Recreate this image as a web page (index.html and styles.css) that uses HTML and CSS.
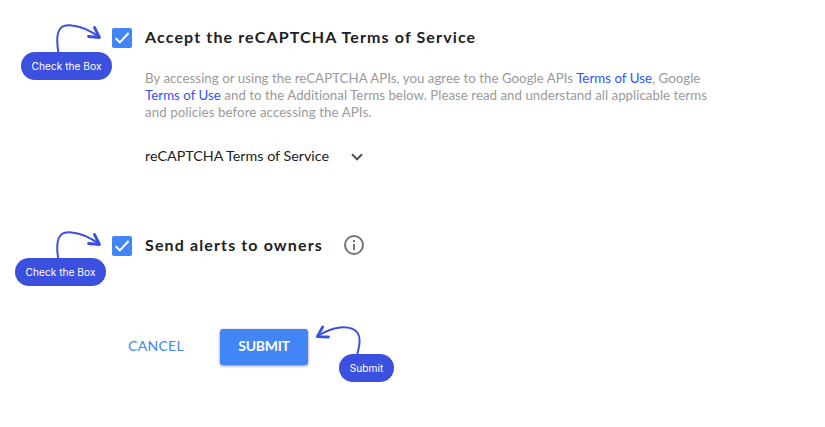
FILE: index.html
```
<!DOCTYPE html>
<html lang="en">
<head>
  <meta charset="UTF-8">
  <meta name="viewport" content="width=device-width, initial-scale=1.0">
  <title>reCAPTCHA</title>
  <link rel="stylesheet" href="styles.css">
</head>
<body>

<main class="form">
  <!-- Terms -->
  <section class="option terms">
    <span class="checkbox">
      <svg viewBox="0 0 20 20"><path d="M3.7 10.2 7.9 14.4 16.6 5"/></svg>
    </span>
    <div class="option-body">
      <h2>Accept the reCAPTCHA Terms of Service</h2>
      <p class="terms-text">
        <span class="line-1">By accessing or using the reCAPTCHA APIs, you agree to the Google APIs <a>Terms of Use</a>, Google</span><br>
        <span class="line-2"><a>Terms of Use</a> and to the Additional Terms below. Please read and understand all applicable terms</span><br>
        <span class="line-3">and policies before accessing the APIs.</span>
      </p>
      <div class="expander">
        <span>reCAPTCHA Terms of Service</span>
        <svg class="chevron" viewBox="0 0 12 8"><path d="M1 1.2 6 6.3 11 1.2"/></svg>
      </div>
    </div>
    <div class="hint hint-terms">
      <svg class="arrow" viewBox="0 0 50 32">
        <path class="stem" d="M3.500 31C1.500 20 1.500 12 5 7C8 3 13 3 17 3.500C27 4.500 36 9 44 15"/>
        <path class="head" d="M39.500 5.500 44.500 15.500 33.500 14.500"/>
      </svg>
      <span class="pill">Check the Box</span>
    </div>
  </section>

  <!-- Alerts -->
  <section class="option alerts">
    <span class="checkbox">
      <svg viewBox="0 0 20 20"><path d="M3.7 10.2 7.9 14.4 16.6 5"/></svg>
    </span>
    <h2>Send alerts to owners</h2>
    <svg class="info" viewBox="0 0 20 20">
      <circle cx="10" cy="10" r="9"/>
      <path d="M10 5v2M10 9v6"/>
    </svg>
    <div class="hint hint-alerts">
      <svg class="arrow" viewBox="0 0 50 32">
        <path class="stem" d="M3.500 31C1.500 20 1.500 12 5 7C8 3 13 3 17 3.500C27 4.500 36 9 44 15"/>
        <path class="head" d="M39.500 5.500 44.500 15.500 33.500 14.500"/>
      </svg>
      <span class="pill">Check the Box</span>
    </div>
  </section>

  <!-- Buttons -->
  <section class="actions">
    <button class="btn-cancel">CANCEL</button>
    <button class="btn-submit">SUBMIT</button>
    <div class="hint hint-submit">
      <svg class="arrow" viewBox="0 0 50 32">
        <path class="stem" d="M43 31C46 21 47 14 43.700 9C40 4 32 3 26 3.500C17 4.500 10 8 4 12"/>
        <path class="head" d="M8.700 3 3.200 12.600 14.500 13"/>
      </svg>
      <span class="pill">Submit</span>
    </div>
  </section>
</main>

</body>
</html>
```

FILE: styles.css
```
* {
  margin: 0;
  padding: 0;
  box-sizing: border-box;
}

body {
  min-height: 100vh;
  font-family: Lato, 'Open Sans', sans-serif;
  font-variant-ligatures: none;
  background: #fff;
  color: #202124;
}

.form {
  min-height: 100vh;
  padding: 28px 0 0 112px;
}

.option {
  position: relative;
  display: flex;
  gap: 13px;
}

.terms {
  height: 208px;
}

.alerts {
  height: 93px;
}

.checkbox {
  width: 20px;
  height: 20px;
  border-radius: 2px;
  background: #4285f4;
}

.checkbox svg {
  display: block;
}

.checkbox path {
  fill: none;
  stroke: #fff;
  stroke-width: 2;
}

h2 {
  height: 20px;
  font-size: 16px;
  line-height: 18px;
  font-weight: 700;
  letter-spacing: 1.13px;
  white-space: nowrap;
}

.terms-text {
  margin-top: 22px;
  font-size: 13.3px;
  line-height: 17px;
  letter-spacing: 0.02px;
  color: #9a9a9a;
  white-space: nowrap;
}

.line-3 {
  letter-spacing: 0.08px;
}

.terms-text a {
  color: #2f54f5;
}

.expander {
  display: flex;
  gap: 22px;
  height: 20px;
  margin-top: 26px;
  font-size: 14.3px;
  line-height: 17px;
  white-space: nowrap;
}

.chevron {
  width: 12px;
  height: 8px;
  margin-top: 6px;
  fill: none;
  stroke: #555;
  stroke-width: 2;
}

.info {
  width: 20px;
  height: 20px;
  margin: -1px 0 0 8px;
  fill: none;
  stroke: #757575;
  stroke-width: 2;
}

.actions {
  position: relative;
  display: flex;
  gap: 20px;
}

button {
  height: 36px;
  padding-bottom: 3px;
  border: none;
  border-radius: 3px;
  font-family: inherit;
  font-size: 14px;
  cursor: pointer;
}

.btn-cancel {
  width: 88px;
  background: none;
  color: #4285f4;
  letter-spacing: 0.3px;
}

.btn-submit {
  width: 88px;
  background: #4285f4;
  color: #fff;
  font-weight: 700;
  letter-spacing: -0.3px;
  box-shadow: 0 1px 3px rgba(0, 0, 0, 0.45);
}

/* Callouts over the form */
.hint {
  position: absolute;
}

.hint-terms {
  left: -91px;
  top: -6px;
}

.hint-alerts {
  left: -97px;
  top: -7px;
}

.hint-submit {
  left: 202px;
  top: -5px;
}

.arrow {
  display: block;
  width: 50px;
  height: 32px;
  margin-left: 34px;
  fill: none;
  stroke: #3c50e0;
  stroke-linecap: round;
  stroke-linejoin: round;
}

.hint-alerts .arrow {
  margin-left: 40px;
}

.hint-submit .arrow {
  margin-left: 0;
}

.stem {
  stroke-width: 2;
}

.head {
  stroke-width: 2.8;
}

.pill {
  display: block;
  width: 91px;
  height: 28px;
  margin-top: -2px;
  border-radius: 14px;
  background: #3c50e0;
  color: #fff;
  font-family: Inter, sans-serif;
  font-size: 10.2px;
  line-height: 28px;
  text-align: center;
  white-space: nowrap;
}

.hint-alerts .pill {
  margin-top: -3px;
}

.hint-submit .pill {
  width: 55px;
  margin: -2px 0 0 25px;
}
```
